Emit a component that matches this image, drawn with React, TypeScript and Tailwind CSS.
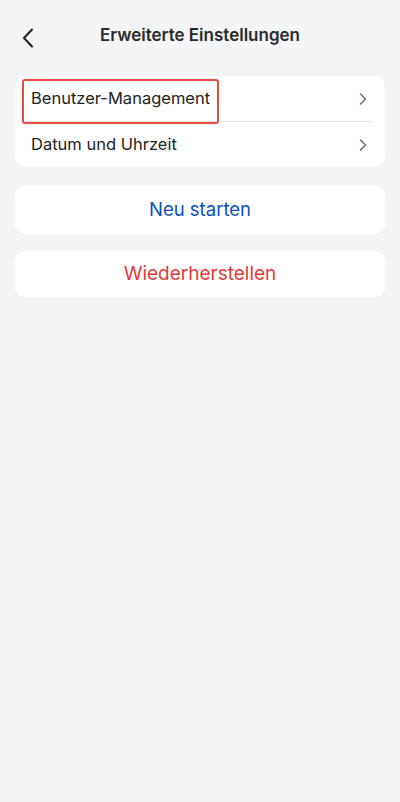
import React from "react"

function Chevron() {
  return (
    <svg width="8" height="12" viewBox="0 0 8 12" fill="none" className="shrink-0">
      <path d="M1.5 1l5 5-5 5" stroke="#6b6b6b" strokeWidth="1.5" strokeLinecap="round" strokeLinejoin="round" />
    </svg>
  )
}

const rows = ["Benutzer-Management", "Datum und Uhrzeit"]

export default function App() {
  return (
    <div className="min-h-[802px] w-[400px] bg-[#f3f4f6] font-['Inter'] text-[#222]">
      {/* Header */}
      <div className="relative flex h-[72px] items-center justify-center">
        <button className="absolute left-[18px] top-[24px] p-1">
          <svg width="12" height="20" viewBox="0 0 12 20" fill="none">
            <path d="M10 1.5L2 10l8 8.5" stroke="#222" strokeWidth="2" strokeLinecap="round" strokeLinejoin="round" />
          </svg>
        </button>
        <h1 className="text-[17px] font-semibold text-[#2a2a2a]">Erweiterte Einstellungen</h1>
      </div>

      <div className="flex flex-col gap-[18px] px-[15px] pt-[4px]">
        {/* Settings list */}
        <div className="rounded-[10px] bg-white">
          {rows.map((label, i) => (
            <div key={label} className="relative">
              <div className="flex h-[45px] items-center justify-between pl-[16px] pr-[18px]">
                <span className="text-[16.5px] text-[#222]">{label}</span>
                <Chevron />
              </div>
              {i === 0 && (
                <>
                  <div className="mx-[8px] mr-[13px] h-px bg-[#e5e5e5]" />
                  <div className="pointer-events-none absolute left-[7px] top-[3px] h-[45px] w-[197px] rounded-[3px] border-2 border-[#ee4a3f]" />
                </>
              )}
            </div>
          ))}
        </div>

        <button className="flex h-[49px] items-center justify-center rounded-[10px] bg-white text-[18.5px] text-[#0b4fc4]">
          Neu starten
        </button>

        <button className="-mt-[1px] flex h-[46px] items-center justify-center rounded-[10px] bg-white text-[19px] text-[#e83a3a]">
          Wiederherstellen
        </button>
      </div>
    </div>
  )
}
